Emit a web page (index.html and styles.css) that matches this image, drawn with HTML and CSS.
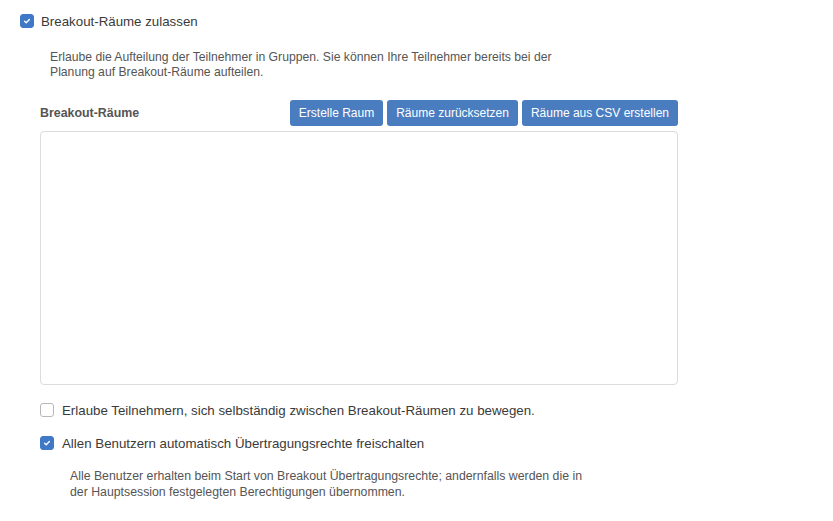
FILE: index.html
```html
<!DOCTYPE html>
<html lang="de">
<head>
    <meta charset="UTF-8">
    <meta name="viewport" content="width=device-width, initial-scale=1.0">
    <title>Breakout-Räume</title>
    <link rel="stylesheet" href="styles.css">
</head>
<body>
    <div class="settings">
        <label class="option">
            <span class="box checked"><svg viewBox="0 0 14 14"><path d="M4.2 7.3 L6.1 9.1 L9.8 5.2" /></svg></span>
            <span class="option-text">Breakout-Räume zulassen</span>
        </label>
        <p class="desc">Erlaube die Aufteilung der Teilnehmer in Gruppen. Sie können Ihre Teilnehmer bereits bei der<br>Planung auf Breakout-Räume aufteilen.</p>

        <div class="sub">
            <div class="rooms-head">
                <span class="rooms-label">Breakout-Räume</span>
                <div class="actions">
                    <button>Erstelle Raum</button>
                    <button>Räume zurücksetzen</button>
                    <button>Räume aus CSV erstellen</button>
                </div>
            </div>
            <div class="rooms-list"></div>

            <label class="option second">
                <span class="box"></span>
                <span class="option-text">Erlaube Teilnehmern, sich selbständig zwischen Breakout-Räumen zu bewegen.</span>
            </label>
            <label class="option third">
                <span class="box checked"><svg viewBox="0 0 14 14"><path d="M4.2 7.3 L6.1 9.1 L9.8 5.2" /></svg></span>
                <span class="option-text">Allen Benutzern automatisch Übertragungsrechte freischalten</span>
            </label>
            <p class="desc">Alle Benutzer erhalten beim Start von Breakout Übertragungsrechte; andernfalls werden die in<br>der Hauptsession festgelegten Berechtigungen übernommen.</p>
        </div>
    </div>
</body>
</html>
```

FILE: styles.css
```css
body {
    font-family: "Liberation Sans", Arial, sans-serif;
    margin: 0;
    padding: 0;
    background-color: #fff;
    color: #333;
}
.settings {
    padding: 14px 20px 0 20px;
}
.option {
    display: flex;
    align-items: center;
    gap: 7px;
    height: 14px;
    font-size: 13.3px;
    color: #3a3a3a;
}
.box {
    width: 12px;
    height: 12px;
    border: 1px solid #b8b8b8;
    border-radius: 3px;
    background: #fff;
    flex-shrink: 0;
    display: flex;
}
.box.checked {
    background: #3e78c6;
    border-color: #3e78c6;
}
.box svg {
    width: 12px;
    height: 12px;
}
.box svg path {
    fill: none;
    stroke: #fff;
    stroke-width: 1.6;
    stroke-linecap: round;
    stroke-linejoin: round;
}
.desc {
    margin: 0;
    padding: 22px 0 0 30px;
    font-size: 12.2px;
    line-height: 15px;
    color: #555;
}
.sub {
    padding-left: 20px;
    width: 638px;
}
.rooms-head {
    display: flex;
    align-items: center;
    justify-content: space-between;
    margin-top: 20px;
}
.rooms-label {
    font-size: 12.4px;
    font-weight: bold;
    color: #555;
}
.actions {
    display: flex;
    gap: 4px;
}
.actions button {
    height: 26px;
    padding: 0 9px;
    background-color: #4a7dc0;
    color: #fff;
    border: none;
    border-radius: 3px;
    font-family: inherit;
    font-size: 12px;
    cursor: pointer;
}
.rooms-list {
    margin-top: 5px;
    height: 252px;
    border: 1px solid #dcdcdc;
    border-radius: 4px;
}
.option.second {
    margin-top: 18px;
    gap: 8px;
}
.option.third {
    margin-top: 19px;
    gap: 8px;
}
.sub .desc {
    padding-top: 18px;
    line-height: 16px;
    font-size: 12.3px;
}
```
